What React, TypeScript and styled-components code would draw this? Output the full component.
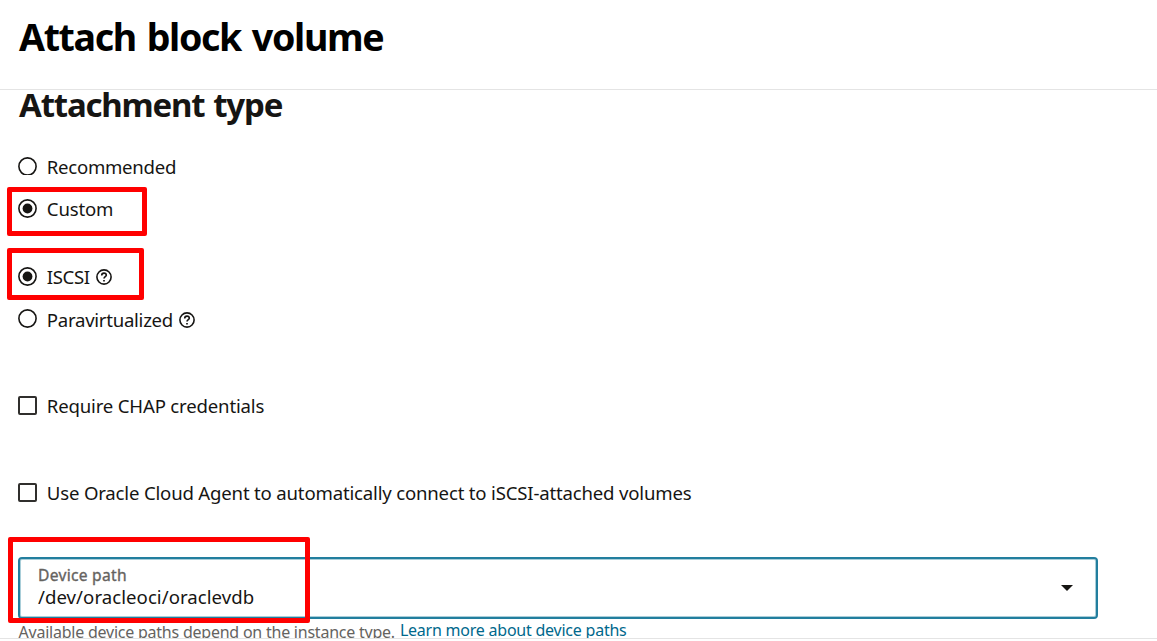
import React from "react";
import styled, { createGlobalStyle } from "styled-components";

const GlobalStyle = createGlobalStyle`
  * { box-sizing: border-box; }
  body { margin: 0; background: #fff; font-family: "Noto Sans", "Open Sans", sans-serif; color: #161513; }
`;

const Page = styled.main`
  display: flex;
  flex-direction: column;
  height: 641px;
  overflow: hidden;
`;

const Header = styled.header`
  flex: none;
  height: 90px;
  padding: 11px 19px 0;
  border-bottom: 1px solid #e4e4e4;
`;

const Title = styled.h1`
  margin: 0;
  font-size: 37.6px;
  line-height: 51px;
  font-weight: 700;
  letter-spacing: -1.35px;
  word-spacing: 2.4px;
  color: #000;
  white-space: nowrap;
`;

const Body = styled.section`
  flex: none;
  height: 549px;
  padding: 0 18px;
  overflow: hidden;
  border-bottom: 1px solid #e4e4e4;
`;

const Heading = styled.h2`
  margin: -8px 0 28px 1px;
  font-size: 33px;
  line-height: 45px;
  font-weight: 700;
  letter-spacing: -1.2px;
  word-spacing: 1.5px;
  white-space: nowrap;
`;

const Option = styled.div<{ $gap: number }>`
  position: relative;
  display: flex;
  align-items: flex-start;
  height: 24px;
  margin-bottom: ${(p) => p.$gap}px;
`;

const Label = styled.span<{ $spacing: number }>`
  margin-left: 9.8px;
  font-size: 18.6px;
  line-height: 24px;
  letter-spacing: ${(p) => p.$spacing}px;
  white-space: nowrap;
`;

const RadioSvg = styled.svg<{ $raise?: boolean; $clipped?: boolean }>`
  flex: none;
  width: 19px;
  height: 19px;
  margin-top: ${(p) => (p.$raise ? 1 : 2)}px;
  clip-path: ${(p) => (p.$clipped ? "inset(0 0 1px 0)" : "none")};
`;

const Checkbox = styled.span<{ $raise?: boolean }>`
  flex: none;
  width: 19px;
  height: 19px;
  margin-top: ${(p) => (p.$raise ? 1 : 2)}px;
  border: 2px solid #302f2d;
  border-radius: 2px;
`;

const HelpSvg = styled.svg`
  flex: none;
  width: 16px;
  height: 16px;
  margin: 4.3px 0 0 6.3px;
`;

const Highlight = styled.span<{ $x: number; $y: number; $w: number; $h: number }>`
  position: absolute;
  left: ${(p) => p.$x}px;
  top: ${(p) => p.$y}px;
  width: ${(p) => p.$w}px;
  height: ${(p) => p.$h}px;
  border: 5px solid #ff0000;
  border-radius: 2px;
  pointer-events: none;
`;

const Select = styled.div`
  position: relative;
  display: flex;
  align-items: center;
  justify-content: space-between;
  width: 1080px;
  height: 62px;
  padding: 0 23px 0 18px;
  border: 2px solid #227e9e;
  border-radius: 4px;
  box-shadow: inset 0 0 0 1px #a9ced9;
`;

const Field = styled.div`
  display: flex;
  flex-direction: column;
  padding-bottom: 2px;
`;

const FieldLabel = styled.span`
  font-size: 15.6px;
  line-height: 20px;
  letter-spacing: 0.28px;
  color: #65635f;
  -webkit-text-stroke: 0.35px #65635f;
`;

const FieldValue = styled.span`
  font-size: 18.6px;
  line-height: 24px;
  letter-spacing: 0.05px;
`;

const Caret = styled.span`
  width: 0;
  height: 0;
  border: 6px solid transparent;
  border-top-color: #161513;
  border-bottom: 0;
`;

const Hint = styled.p`
  display: flex;
  align-items: flex-start;
  margin: 0 0 0 0.5px;
  font-size: 16px;
  line-height: 22px;
  letter-spacing: -0.23px;
  color: #65635f;
  white-space: nowrap;
`;

const HintText = styled.span`
  padding-top: 2px;
`;

const Link = styled.a`
  margin-left: 5px;
  color: #00688c;
`;

function Radio({ checked, raise, clipped }: { checked?: boolean; raise?: boolean; clipped?: boolean }) {
  return (
    <RadioSvg viewBox="0 0 19 19" $raise={raise} $clipped={clipped}>
      <circle cx="9.5" cy="9.5" r="8.6" fill="none" stroke="#161513" strokeWidth="1.6" />
      {checked && <circle cx="9.5" cy="9.5" r="4.9" fill="#161513" />}
    </RadioSvg>
  );
}

function Help() {
  return (
    <HelpSvg viewBox="0 0 16 16" fill="none" stroke="#161513" strokeWidth="1.6">
      <circle cx="8" cy="8" r="7.1" />
      <path d="M5.7 6.4C5.7 5 6.6 4.1 8 4.1S10.3 5 10.3 6.2C10.3 7.7 8 7.7 8 9.6" />
      <path d="M8 10.9V12.5" strokeWidth="1.7" />
    </HelpSvg>
  );
}

export default function App() {
  return (
    <Page>
      <GlobalStyle />
      <Header>
        <Title>Attach block volume</Title>
      </Header>
      <Body>
        <Heading>Attachment type</Heading>
        <Option $gap={18}>
          <Radio clipped />
          <Label $spacing={-0.28}>Recommended</Label>
        </Option>
        <Option $gap={44}>
          <Radio checked />
          <Label $spacing={-0.16}>Custom</Label>
          <Highlight $x={-11} $y={-10} $w={140} $h={49} />
        </Option>
        <Option $gap={19}>
          <Radio checked />
          <Label $spacing={-0.35}>ISCSI</Label>
          <Help />
          <Highlight $x={-11} $y={-17} $w={137} $h={52} />
        </Option>
        <Option $gap={62}>
          <Radio raise />
          <Label $spacing={-0.27}>Paravirtualized</Label>
          <Help />
        </Option>
        <Option $gap={63}>
          <Checkbox />
          <Label $spacing={-0.18}>Require CHAP credentials</Label>
        </Option>
        <Option $gap={52}>
          <Checkbox raise />
          <Label $spacing={-0.185}>Use Oracle Cloud Agent to automatically connect to iSCSI-attached volumes</Label>
        </Option>
        <Select>
          <Field>
            <FieldLabel>Device path</FieldLabel>
            <FieldValue>/dev/oracleoci/oraclevdb</FieldValue>
          </Field>
          <Caret />
          <Highlight $x={-12} $y={-22} $w={302} $h={86} />
        </Select>
        <Hint>
          <HintText>Available device paths depend on the instance type.</HintText>
          <Link>Learn more about device paths</Link>
        </Hint>
      </Body>
    </Page>
  );
}
